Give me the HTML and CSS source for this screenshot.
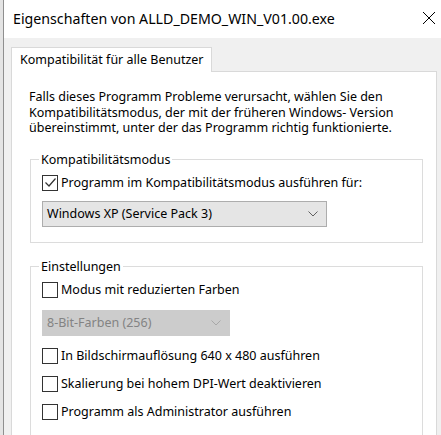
FILE: index.html
```html
<!DOCTYPE html>
<html lang="de">
<head>
  <meta charset="UTF-8" />
  <meta name="viewport" content="width=device-width, initial-scale=1.0" />
  <title>Eigenschaften von ALLD_DEMO_WIN_V01.00.exe</title>
  <link rel="stylesheet" href="styles.css">
</head>
<body>
<div class="screen">
  <div class="behind"></div>

  <div class="window">
    <div class="titlebar">
      <span class="title">Eigenschaften von ALLD_DEMO_WIN_V01.00.exe</span>
      <svg class="close" width="14" height="14" viewBox="0 0 14 14">
        <path d="M1 1 L13 13 M13 1 L1 13" stroke="#000" stroke-width="1" fill="none"/>
      </svg>
    </div>

    <div class="content">
      <div class="tabs">
        <div class="tab">Kompatibilität für alle Benutzer</div>
      </div>

      <div class="panel">
        <p class="intro">
          Falls dieses Programm Probleme verursacht, wählen Sie den<br>
          Kompatibilitätsmodus, der mit der früheren Windows- Version<br>
          übereinstimmt, unter der das Programm richtig funktionierte.
        </p>

        <fieldset class="group">
          <legend>Kompatibilitätsmodus</legend>
          <label class="check first">
            <span class="box checked">
              <svg width="13" height="13" viewBox="0 0 13 13">
                <path d="M1.5 6.5 L5 10 L11.5 2.5" stroke="#333" stroke-width="1.2" fill="none"/>
              </svg>
            </span>
            Programm im Kompatibilitätsmodus ausführen für:
          </label>
          <div class="combo wide">
            <span>Windows XP (Service Pack 3)</span>
            <svg width="10" height="6" viewBox="0 0 10 6">
              <path d="M0.5 0.5 L5 5 L9.5 0.5" stroke="#606060" stroke-width="1" fill="none"/>
            </svg>
          </div>
        </fieldset>

        <fieldset class="group settings">
          <legend>Einstellungen</legend>
          <label class="check first"><span class="box"></span>Modus mit reduzierten Farben</label>
          <div class="combo narrow disabled">
            <span>8-Bit-Farben (256)</span>
            <svg width="10" height="6" viewBox="0 0 10 6">
              <path d="M0.5 0.5 L5 5 L9.5 0.5" stroke="#a8a8a8" stroke-width="1" fill="none"/>
            </svg>
          </div>
          <label class="check"><span class="box"></span>In Bildschirmauflösung 640 x 480 ausführen</label>
          <label class="check"><span class="box"></span>Skalierung bei hohem DPI-Wert deaktivieren</label>
          <label class="check"><span class="box"></span>Programm als Administrator ausführen</label>
        </fieldset>
      </div>
    </div>
  </div>
</div>
</body>
</html>
```

FILE: styles.css
```css
body {
  margin: 0;
  font-family: "Noto Sans", "Liberation Sans", sans-serif;
  color: #000;
  background: #f0f0f0;
  overflow: hidden;
}
.screen {
  display: flex;
  width: 441px;
  height: 435px;
  overflow: hidden;
}
.behind {
  width: 3px;
  flex: none;
  background: #e4e4e4;
}
.window {
  flex: 1;
  border-left: 1px solid #8f8f8f;
  background: #f0f0f0;
  display: flex;
  flex-direction: column;
  min-width: 0;
}
.titlebar {
  height: 38px;
  flex: none;
  background: #fff;
  display: flex;
  align-items: center;
  justify-content: space-between;
  padding: 0 5px 0 9px;
}
.title {
  font-size: 14.2px;
  white-space: nowrap;
  margin-top: -2px;
}
.close {
  margin-top: -2px;
}
.content {
  padding: 9px 4px 0 7px;
  flex: 1;
  display: flex;
  flex-direction: column;
}
.tabs {
  display: flex;
  position: relative;
  z-index: 1;
  margin-bottom: -1px;
}
.tab {
  background: #fff;
  border: 1px solid #d9d9d9;
  border-bottom: none;
  height: 25px;
  padding: 0 9px 0 8px;
  font-size: 12.5px;
  line-height: 24px;
  width: 201px;
  box-sizing: border-box;
  white-space: nowrap;
}
.panel {
  flex: 1;
  background: #fff;
  border: 1px solid #d9d9d9;
  border-bottom: none;
  padding: 0 13px 0 0;
}
.intro {
  margin: 17px 0 0 17px;
  font-size: 12.5px;
  line-height: 15.5px;
  white-space: nowrap;
}
.group {
  margin: 16px 0 0 18px;
  padding: 0 0 15px 11px;
  border: 1px solid #dcdcdc;
  font-size: 12.5px;
}
.group legend {
  padding: 0 2px;
  margin-left: -3px;
  line-height: 16px;
}
.settings {
  padding-bottom: 30px;
}
.check {
  display: flex;
  align-items: center;
  gap: 3px;
  height: 16px;
  margin-top: 12px;
  white-space: nowrap;
}
.check.first {
  margin-top: 7px;
}
.box {
  width: 14px;
  height: 14px;
  border: 1px solid #333;
  background: #fff;
  flex: none;
  display: flex;
  align-items: center;
  justify-content: center;
}
.combo {
  height: 26px;
  box-sizing: border-box;
  border: 1px solid #adadad;
  background: #e5e5e5;
  display: flex;
  align-items: center;
  justify-content: space-between;
  padding: 0 8px 0 4px;
  margin-top: 10px;
}
.combo.wide {
  width: 285px;
}
.combo.narrow {
  width: 188px;
  margin-top: 12px;
}
.combo.disabled {
  background: #cccccc;
  border-color: #cccccc;
  color: #838383;
}
.combo.narrow + .check {
  margin-top: 12px;
}
```
